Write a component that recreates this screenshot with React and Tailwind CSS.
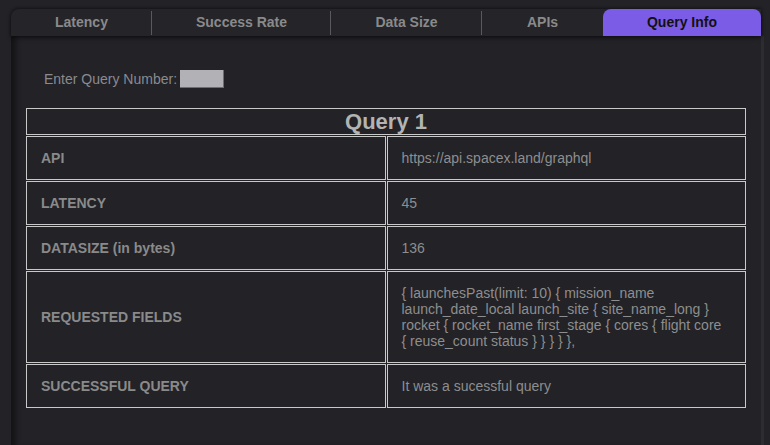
import React, { useState } from 'react';

const TABS = [
  { name: 'Latency', w: 'w-[141px]' },
  { name: 'Success Rate', w: 'w-[179px]' },
  { name: 'Data Size', w: 'w-[151px]' },
  { name: 'APIs', w: 'w-[121px]' },
  { name: 'Query Info', w: 'w-[158px]' },
];

const QUERY = {
  api: 'https://api.spacex.land/graphql',
  latency: 45,
  datasize: 136,
  fields:
    '{ launchesPast(limit: 10) { mission_name launch_date_local launch_site { site_name_long } rocket { rocket_name first_stage { cores { flight core { reuse_count status } } } } },',
  success: 'It was a sucessful query',
};

const Row = ({ label, children }) => (
  <>
    <div className="flex items-center border border-[#c9c9c9] px-[14px] py-[13px] text-[14px] font-bold text-[#8a8a8a] leading-[16px]">
      {label}
    </div>
    <div className="flex items-center border border-[#c9c9c9] pl-[14px] pr-[20px] py-[13px] text-[14px] text-[#8e8e8e] leading-[16px]">
      <div>{children}</div>
    </div>
  </>
);

export default function App() {
  const [active, setActive] = useState('Query Info');
  const [num, setNum] = useState('');

  return (
    <div
      className="w-[770px] h-[445px] overflow-hidden bg-[#222227] pt-[9px] pl-[11px]"
      style={{ fontFamily: '"Liberation Sans", Arial, sans-serif' }}
    >
      <div className="w-[753px]">
        {/* tab bar */}
        <div className="relative z-10 flex h-[27px] w-[750px] rounded-tl-[8px] bg-[#242429] shadow-[0_2px_4px_rgba(0,0,0,0.45),0_-1px_3px_rgba(0,0,0,0.35)]">
          {TABS.map((t, i) => {
            const on = t.name === active;
            const next = TABS[i + 1];
            return (
              <button
                key={t.name}
                onClick={() => setActive(t.name)}
                className={
                  'relative flex-none text-center text-[14px] font-bold leading-[27px] ' +
                  t.w +
                  (on ? ' rounded-t-[8px] bg-[#7b5ce6] text-[#111]' : ' text-[#8a8a8a]')
                }
              >
                {t.name}
                {!on && next && next.name !== active && (
                  <span className="absolute right-0 top-[2px] h-[24px] w-px bg-[#5a5a5e]" />
                )}
              </button>
            );
          })}
        </div>

        {/* panel */}
        <div className="h-[409px] border-r-[3px] border-[#2c2c31] bg-[#222227] px-[15px] pt-[34px] shadow-[inset_8px_0_5px_-3px_rgba(0,0,0,0.4)]">
          <div className="ml-[18px] flex h-[18px] items-center text-[14px] text-[#8a8a8f]">
            <span>Enter Query Number:</span>
            <input
              value={num}
              onChange={(e) => setNum(e.target.value)}
              className="ml-[3px] h-[18px] w-[44px] border-r border-b border-[#6d6d72] bg-[#b1b1b6] px-1 text-[12px] text-black outline-none"
            />
          </div>

          <div className="mt-[20px] grid w-[720px] grid-cols-2 gap-px">
            <div className="col-span-2 border border-[#c9c9c9] text-center text-[22px] font-bold leading-[25px] text-[#b3b3b3]">
              Query 1
            </div>
            <Row label="API">{QUERY.api}</Row>
            <Row label="LATENCY">{QUERY.latency}</Row>
            <Row label="DATASIZE (in bytes)">{QUERY.datasize}</Row>
            <Row label="REQUESTED FIELDS">{QUERY.fields}</Row>
            <Row label="SUCCESSFUL QUERY">{QUERY.success}</Row>
          </div>
        </div>
      </div>
    </div>
  );
}
